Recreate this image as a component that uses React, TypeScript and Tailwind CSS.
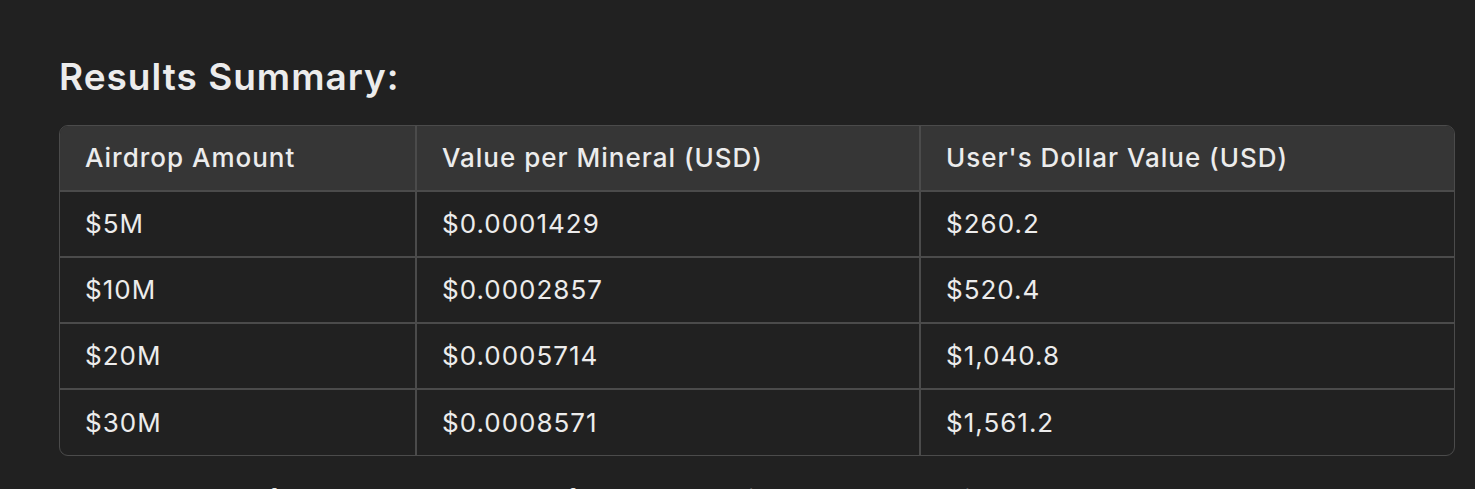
import React from 'react';

const rows = [
  ['$5M', '$0.0001429', '$260.2'],
  ['$10M', '$0.0002857', '$520.4'],
  ['$20M', '$0.0005714', '$1,040.8'],
  ['$30M', '$0.0008571', '$1,561.2'],
];

const App: React.FC = () => {
  return (
    <div
      className="h-[489px] overflow-hidden bg-[#212121] text-[#ececec]"
      style={{ fontFamily: 'Inter, "Noto Sans", sans-serif' }}
    >
      <div className="ml-[59px] mr-[20px] pt-[54px]">
        {/* Heading */}
        <h2 className="text-[37px] font-semibold leading-[46px] tracking-[1px]">Results Summary:</h2>

        {/* Table */}
        <div className="mt-[25px] rounded-[9px] border border-[#4b4b4b] overflow-hidden">
          <table className="w-full table-fixed border-collapse text-[26px] leading-[30px] tracking-[1px]">
            <colgroup>
              <col className="w-[356px]" />
              <col className="w-[504px]" />
              <col />
            </colgroup>
            <thead>
              <tr className="bg-[#363636] h-[65px]">
                <th className="text-left font-medium px-[25px] border-r-2 border-[#4b4b4b]">Airdrop Amount</th>
                <th className="text-left font-medium px-[25px] border-r-2 border-[#4b4b4b]">Value per Mineral (USD)</th>
                <th className="text-left font-medium px-[25px]">User's Dollar Value (USD)</th>
              </tr>
            </thead>
            <tbody>
              {rows.map((r) => (
                <tr key={r[0]} className="h-[66px] border-t-2 border-[#4b4b4b]">
                  <td className="px-[25px] border-r-2 border-[#4b4b4b]">{r[0]}</td>
                  <td className="px-[25px] border-r-2 border-[#4b4b4b]">{r[1]}</td>
                  <td className="px-[25px]">{r[2]}</td>
                </tr>
              ))}
            </tbody>
          </table>
        </div>

        {/* Following paragraph, cut off by the window */}
        <p className="mt-[26px] text-[26px] leading-[36px] tracking-[0.9px]">
          These values reflect the dollar worth of the user's minerals at each airdrop level.
        </p>
      </div>
    </div>
  );
};

export default App;
